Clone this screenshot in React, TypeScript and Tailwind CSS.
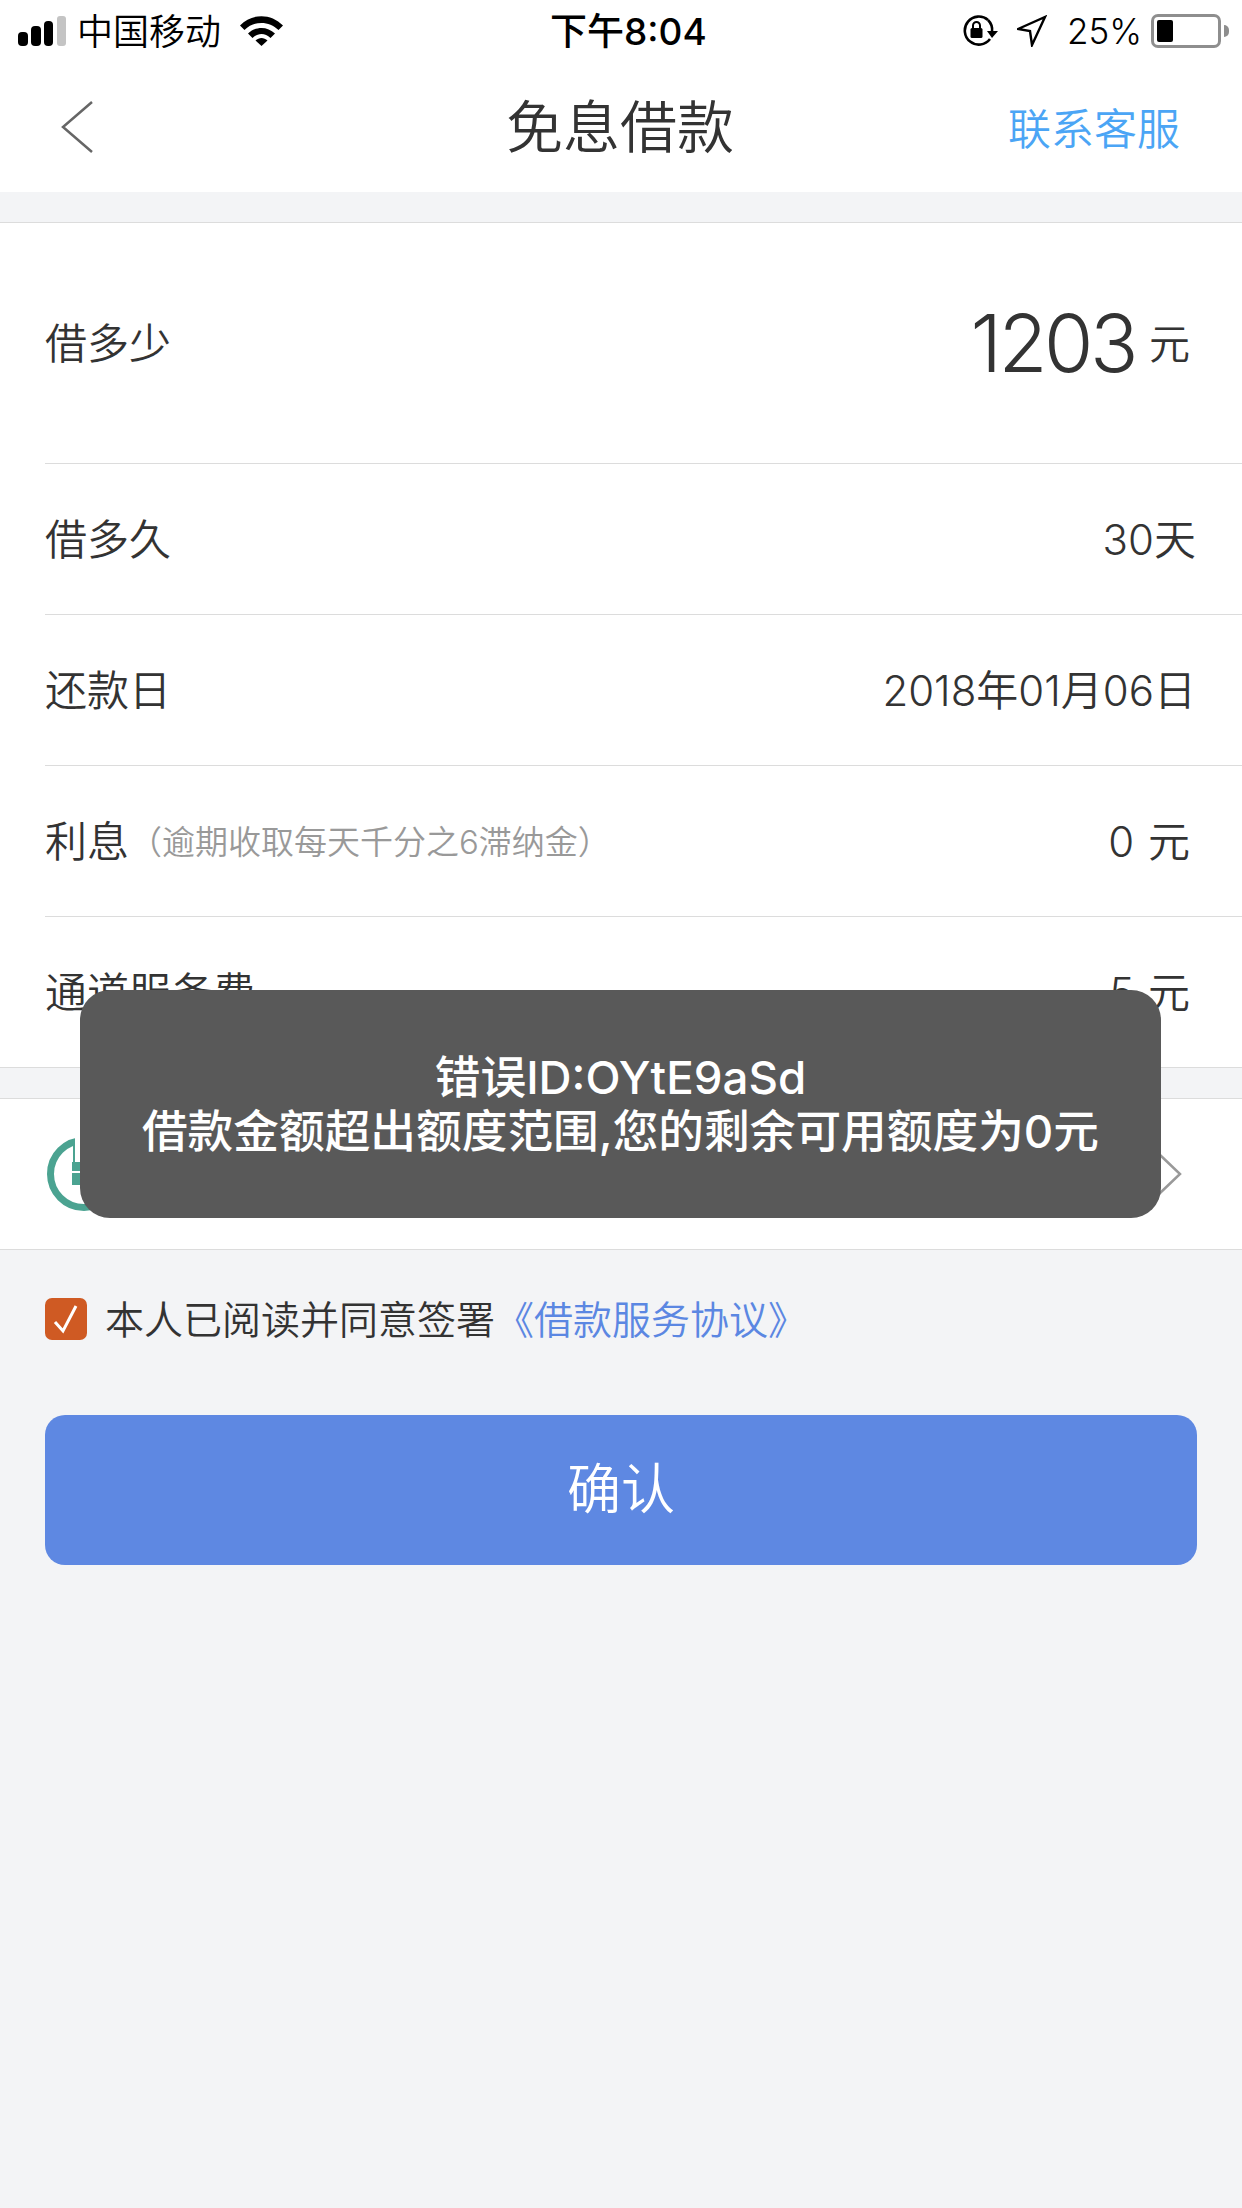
const cjk = "font-['Inter','Noto_Sans_CJK_SC',sans-serif]"

function StatusBar() {
  return (
    <div className="flex h-[62px] items-center pr-[13px] pl-[18px] text-black">
      <div className="flex w-[532px] items-center">
        <svg width="48" height="30" viewBox="0 0 48 30">
          <rect x="0" y="16" width="10" height="14" rx="4" fill="#000" />
          <rect x="13" y="10" width="10" height="20" rx="4" fill="#000" />
          <rect x="26" y="5" width="9" height="25" rx="4" fill="#000" />
          <rect x="39" y="0" width="9" height="30" rx="3" fill="#c4c4c4" />
        </svg>
        <span className="mt-[2px] ml-[11px] text-[36px] leading-none font-[350]">中国移动</span>
        <svg className="ml-[19px]" width="43" height="30" viewBox="0 0 43 30">
          <path d="M0 9.500C12 -3 31 -3 43 9.500L38.500 14C29 4.500 14 4.500 4.500 14Z" fill="#000" />
          <path d="M8 17.500C15.500 10 27.500 10 35 17.500L30.500 22C25 16.500 18 16.500 12.500 22Z" fill="#000" />
          <path d="M15.500 24.500C19 21 24 21 27.500 24.500L21.500 30Z" fill="#000" />
        </svg>
      </div>
      <span className="text-[37px] leading-none font-medium">下午8:04</span>
      <div className="flex flex-1 items-center justify-end">
        <svg width="36" height="32" viewBox="0 0 36 32">
          <path d="M26 5A14 14 0 1 0 28 24" fill="none" stroke="#000" strokeWidth="2.600" />
          <path d="M26 5A14 14 0 0 1 30 17" fill="none" stroke="#000" strokeWidth="2.600" />
          <path d="M25 16H36L30 23Z" fill="#000" />
          <rect x="8.500" y="13" width="12" height="10" rx="1.500" fill="#000" />
          <path d="M11 13V10.500A3.500 3.500 0 0 1 18 10.500V13" fill="none" stroke="#000" strokeWidth="2" />
        </svg>
        <svg className="ml-[19px]" width="30" height="32" viewBox="0 0 30 32">
          <path d="M1 14L28 2L15 30L13 16Z" fill="none" stroke="#000" strokeWidth="2.400" strokeLinejoin="miter" />
        </svg>
        <span className="ml-[20px] text-[35px] leading-none font-light">25%</span>
        <div className="ml-[9px] flex h-[34px] w-[70px] items-center rounded-[7px] border-[3px] border-[#8e8e8e] p-[3px]">
          <div className="h-full w-[16px] rounded-[2px] bg-black" />
        </div>
        <div className="ml-[3px] h-[12px] w-[5px] rounded-r-full bg-[#8e8e8e]" />
      </div>
    </div>
  )
}

function NavBar() {
  return (
    <div className="grid h-[130px] grid-cols-3 items-center pr-[62px] pl-[60px]">
      <svg width="34" height="54" viewBox="0 0 34 54">
        <path d="M32 2L3 27L32 52" fill="none" stroke="#666" strokeWidth="2.500" />
      </svg>
      <span className="text-center text-[57px] leading-none font-[350] text-[#333]">免息借款</span>
      <span className="mt-[5px] text-right text-[43px] leading-none font-[350] text-[#4ba5f5]">联系客服</span>
    </div>
  )
}

function Row({ label, note, value }: { label: string; note?: string; value: React.ReactNode }) {
  return (
    <div className="ml-[45px] flex h-[151px] items-center justify-between border-b border-[#dcdcdc] pt-[2px] pr-[46px]">
      <div className="flex items-center">
        <span className="text-[42px] leading-none font-[350] text-[#333]">{label}</span>
        {note && <span className="text-[33px] leading-none font-[350] text-[#999]">（逾期收取每天千分之6滞纳金）</span>}
      </div>
      {value}
    </div>
  )
}

function Unit({ n }: { n: string }) {
  return (
    <span className="pr-[6px] text-[42px] leading-none font-[350] text-[#333]">
      {n} <span className="ml-[2px]">元</span>
    </span>
  )
}

export default function App() {
  return (
    <div className={`relative h-[2208px] w-[1242px] overflow-hidden bg-[#f3f4f6] ${cjk}`}>
      <div className="bg-white">
        <StatusBar />
        <NavBar />
      </div>
      <div className="mt-[30px] border-y border-[#dcdcdc] bg-white">
        <div className="ml-[45px] flex h-[241px] items-center justify-between border-b border-[#dcdcdc] pr-[52px]">
          <span className="mt-[2px] text-[42px] leading-none font-[350] text-[#333]">借多少</span>
          <div className="flex items-center">
            <span className="text-[80px] leading-none font-light tracking-[-3.5px] text-[#333]">1203</span>
            <span className="mt-[2px] ml-[14px] text-[41px] leading-none font-[350] text-[#333]">元</span>
          </div>
        </div>
        <Row label="借多久" value={<span className="text-[42px] leading-none font-[350] text-[#333]">30天</span>} />
        <Row label="还款日" value={<span className="text-[42px] leading-none font-[350] text-[#333]">2018年01月06日</span>} />
        <Row label="利息" note="1" value={<Unit n="0" />} />
        <div className="ml-[45px] flex h-[150px] items-center justify-between pt-[2px] pr-[46px]">
          <span className="text-[42px] leading-none font-[350] text-[#333]">通道服务费</span>
          <Unit n="5" />
        </div>
      </div>
      <div className="mt-[30px] flex h-[152px] items-center justify-between border-y border-[#dcdcdc] bg-white pr-[58px] pl-[47px]">
        <svg width="74" height="74" viewBox="0 0 74 74">
          <circle cx="37" cy="37" r="33.500" fill="none" stroke="#4ba391" strokeWidth="7" />
          <rect x="28" y="0" width="18" height="14" fill="#fff" />
          <rect x="26" y="2" width="2" height="24" fill="#4ba391" />
          <rect x="25" y="25" width="24" height="9" fill="#4ba391" />
          <rect x="25" y="36" width="24" height="12" fill="#4ba391" />
        </svg>
        <svg width="28" height="44" viewBox="0 0 28 44">
          <path d="M3 2L24 22L3 42" fill="none" stroke="#999" strokeWidth="2.500" />
        </svg>
      </div>
      <div className="mt-[48px] flex items-center pl-[45px]">
        <div className="flex h-[42px] w-[42px] items-center justify-center rounded-[7px] bg-[#cf5a23]">
          <svg width="26" height="30" viewBox="0 0 26 30">
            <path d="M2 18L10 27L23 2" fill="none" stroke="#fff" strokeWidth="3" />
          </svg>
        </div>
        <span className="ml-[18px] text-[39px] leading-none font-[350] text-[#333]">本人已阅读并同意签署</span>
        <span className="text-[39px] leading-none font-[350] text-[#5b87e2]">《借款服务协议》</span>
      </div>
      <div className="mx-[45px] mt-[75px] flex h-[150px] items-center justify-center rounded-[20px] bg-[#5e88e2] text-[54px] leading-none font-[350] text-white">
        确认
      </div>
      <div className="absolute top-[990px] left-[80px] flex h-[228px] w-[1081px] flex-col items-center justify-center rounded-[30px] bg-[#595959] pt-[1px] text-[45.7px] leading-[54px] font-medium text-white">
        <span>错误ID:OYtE9aSd</span>
        <span>借款金额超出额度范围,您的剩余可用额度为0元</span>
      </div>
    </div>
  )
}
